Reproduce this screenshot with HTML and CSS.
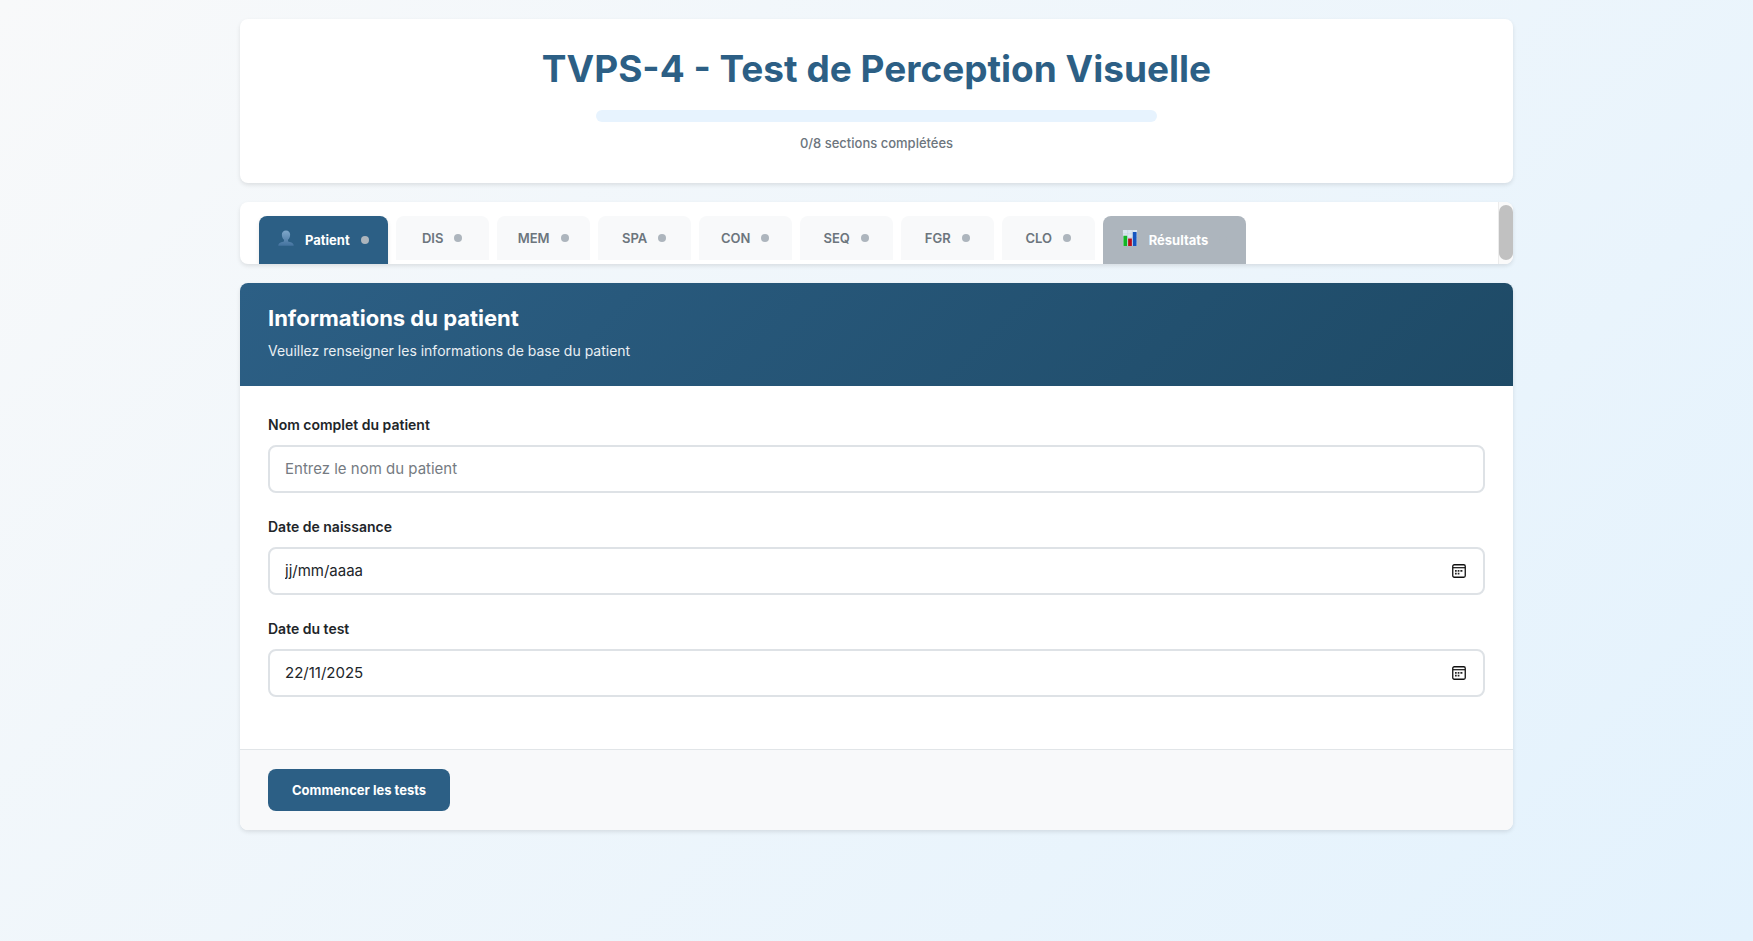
FILE: index.html
```html
<!DOCTYPE html>
<html lang="fr">
<head>
<meta charset="utf-8">
<meta name="viewport" content="width=device-width, initial-scale=1">
<title>TVPS-4 - Test de Perception Visuelle</title>
<link rel="stylesheet" href="styles.css">
</head>
<body>
<div class="container">
  <header class="card page-header">
    <h1>TVPS-4 - Test de Perception Visuelle</h1>
    <div class="progress" role="progressbar" aria-valuenow="0" aria-valuemin="0" aria-valuemax="8" aria-label="Progression"></div>
    <p class="progress-text">0/8 sections complétées</p>
  </header>

  <nav class="card tabs">
    <div class="tab-list">
      <button type="button" class="tab tab-tall active">
        <svg class="emoji" viewBox="0 0 17 17" aria-hidden="true">
          <defs><linearGradient id="bust" x1="0" y1="0" x2="0" y2="1"><stop offset="0" stop-color="#7fa7ca"/><stop offset="1" stop-color="#44739f"/></linearGradient></defs>
          <path fill="url(#bust)" d="M8.500.5c2.700 0 4.400 1.700 4.400 4.600 0 2.400-1 4.300-2.300 5.300v1.200c0 .7 1.400 1 3 1.500 1.800.5 2.900 1.500 3.100 3.600H.3c.2-2.100 1.300-3.100 3.100-3.600 1.600-.5 3-.8 3-1.500v-1.200C5.100 9.400 4.100 7.500 4.100 5.100 4.100 2.200 5.800.5 8.500.5z"/>
        </svg>
        <span>Patient</span><i class="dot"></i>
      </button>
      <button type="button" class="tab"><span>DIS</span><i class="dot"></i></button>
      <button type="button" class="tab"><span>MEM</span><i class="dot"></i></button>
      <button type="button" class="tab"><span>SPA</span><i class="dot"></i></button>
      <button type="button" class="tab"><span>CON</span><i class="dot"></i></button>
      <button type="button" class="tab"><span>SEQ</span><i class="dot"></i></button>
      <button type="button" class="tab"><span>FGR</span><i class="dot"></i></button>
      <button type="button" class="tab"><span>CLO</span><i class="dot"></i></button>
      <button type="button" class="tab tab-tall results">
        <svg class="emoji" viewBox="0 0 17 17" aria-hidden="true">
          <path fill="#dbe6f0" d="M1 0h15v17H1z"/>
          <path stroke="#bccbdc" stroke-width=".5" d="M1 4h15M1 8h15M1 12h15M6 0v17M11 0v17"/>
          <path fill="#12b524" d="M1.500 6h4v11h-4z"/>
          <path fill="#b80d18" d="M6.500 9h4v8h-4z"/>
          <path fill="#1555c0" d="M11.500 2h4v15h-4z"/>
        </svg>
        <span>Résultats</span><i class="dot"></i>
      </button>
    </div>
    <div class="scroll-track"><div class="scroll-thumb"></div></div>
  </nav>

  <main class="card panel">
    <div class="panel-header">
      <h2>Informations du patient</h2>
      <p>Veuillez renseigner les informations de base du patient</p>
    </div>
    <form class="panel-body" id="patient-form">
      <div class="field">
        <label for="name">Nom complet du patient</label>
        <div class="control"><input id="name" type="text" placeholder="Entrez le nom du patient"></div>
      </div>
      <div class="field">
        <label for="birth">Date de naissance</label>
        <div class="control">
          <input id="birth" class="date" type="text" placeholder="jj/mm/aaaa">
          <button type="button" class="picker" aria-label="Choisir la date de naissance">
            <svg viewBox="0 0 14 14"><rect x=".75" y=".75" width="12.500" height="12.500" rx="1.500" fill="none" stroke="#111" stroke-width="1.300"/><path stroke="#111" stroke-width="1.200" d="M1 3.700h12"/><path fill="#222" d="M3 6h1.700v1.700H3zM5.700 6h1.700v1.700H5.700zM8.400 6h2v1.700h-2zM3 8.800h1.700v1.700H3zM5.700 8.800h1.700v1.700H5.700z"/></svg>
          </button>
        </div>
      </div>
      <div class="field">
        <label for="test-date">Date du test</label>
        <div class="control">
          <input id="test-date" class="date" type="text" value="22/11/2025">
          <button type="button" class="picker" aria-label="Choisir la date du test">
            <svg viewBox="0 0 14 14"><rect x=".75" y=".75" width="12.500" height="12.500" rx="1.500" fill="none" stroke="#111" stroke-width="1.300"/><path stroke="#111" stroke-width="1.200" d="M1 3.700h12"/><path fill="#222" d="M3 6h1.700v1.700H3zM5.700 6h1.700v1.700H5.700zM8.400 6h2v1.700h-2zM3 8.800h1.700v1.700H3zM5.700 8.800h1.700v1.700H5.700z"/></svg>
          </button>
        </div>
      </div>
    </form>
    <footer class="panel-footer">
      <button type="submit" form="patient-form" class="primary">Commencer les tests</button>
    </footer>
  </main>
</div>
</body>
</html>
```

FILE: styles.css
```css
*, *::before, *::after { box-sizing: border-box; }
body {
  margin: 0;
  min-height: 100vh;
  font-family: Inter, "Liberation Sans", sans-serif;
  font-size: 15px;
  line-height: 24px;
  color: #212529;
  background: linear-gradient(135deg, #f8f9fa 0%, #e3f2fd 100%);
}
h1, h2, p { margin: 0; }
button, input { font: inherit; }
button { border: 0; cursor: pointer; }

.container {
  max-width: 1311px;
  margin: 0 auto;
  padding: 19px;
  display: flex;
  flex-direction: column;
  gap: 19px;
}
.card {
  background: #fff;
  border-radius: 8px;
  box-shadow: 0 2px 4px rgba(0, 0, 0, .1);
  overflow: hidden;
}

.page-header {
  padding: 28px;
  display: flex;
  flex-direction: column;
  align-items: center;
}
.page-header h1 {
  font-size: 37px;
  line-height: 44px;
  font-weight: 700;
  color: #2c5f85;
}
.progress {
  width: 561px;
  max-width: 100%;
  height: 12px;
  margin-top: 19px;
  border-radius: 6px;
  background: #e7f3fe;
}
.progress-text {
  margin-top: 9px;
  font-size: 13px;
  font-weight: 500;
  color: #6c757d;
}

.tabs { display: flex; }
.tab-list {
  flex: 1;
  display: flex;
  align-items: flex-start;
  gap: 8px;
  padding: 14px 19px 0;
}
.tab {
  display: flex;
  align-items: center;
  justify-content: center;
  gap: 11px;
  min-width: 93px;
  height: 44px;
  padding: 0 19px;
  border-radius: 8px 8px 0 0;
  background: #f8f9fa;
  color: #6c757d;
  font-size: 13px;
  font-weight: 600;
}
.tab-tall { height: 48px; color: #fff; font-weight: 700; }
.active {
  background: #2c5f85;
  box-shadow: 0 2px 4px rgba(0, 0, 0, .1);
}
.results { background: #adb5bd; }
.emoji { width: 16px; height: 16px; margin-bottom: 5px; }
.dot {
  width: 8px;
  height: 8px;
  border-radius: 50%;
  background: #adb5bd;
}
.scroll-track {
  width: 15px;
  padding: 3px 0 4px;
  display: flex;
  background: #fafafa;
  border-left: 1px solid #ececec;
}
.scroll-thumb { flex: 1; border-radius: 7px; background: #c1c1c1; }

.panel-header {
  padding: 21px 28px 23px;
  color: #fff;
  background: linear-gradient(135deg, #2c5f85 0%, #1e4a66 100%);
}
.panel-header h2 {
  font-size: 22px;
  line-height: 28px;
  font-weight: 700;
}
.panel-header p {
  margin-top: 7px;
  font-size: 14px;
  color: #e9eff3;
}
.panel-body {
  padding: 27px 28px 52px;
  display: flex;
  flex-direction: column;
  gap: 22px;
}
.field label {
  display: block;
  margin-bottom: 8px;
  font-size: 14px;
  font-weight: 600;
}
.control {
  display: flex;
  align-items: center;
  height: 48px;
  padding: 0 17px 0 15px;
  border: 2px solid #dee2e6;
  border-radius: 8px;
  background: #fff;
}
.control input {
  flex: 1;
  min-width: 0;
  padding: 0;
  border: 0;
  outline: 0;
  background: transparent;
  color: #212529;
}
.control input::placeholder { color: #757b82; opacity: 1; }
.control .date::placeholder { color: #212529; }
.picker {
  width: 14px;
  height: 14px;
  padding: 0;
  background: none;
}
.picker svg { display: block; width: 100%; height: 100%; }
.panel-footer {
  padding: 19px 28px;
  border-top: 1px solid #e1e5e8;
  background: #f8f9fa;
}
.primary {
  display: block;
  height: 42px;
  padding: 0 24px;
  border-radius: 8px;
  background: #2c5f85;
  color: #fff;
  font-size: 13px;
  font-weight: 700;
}
```
